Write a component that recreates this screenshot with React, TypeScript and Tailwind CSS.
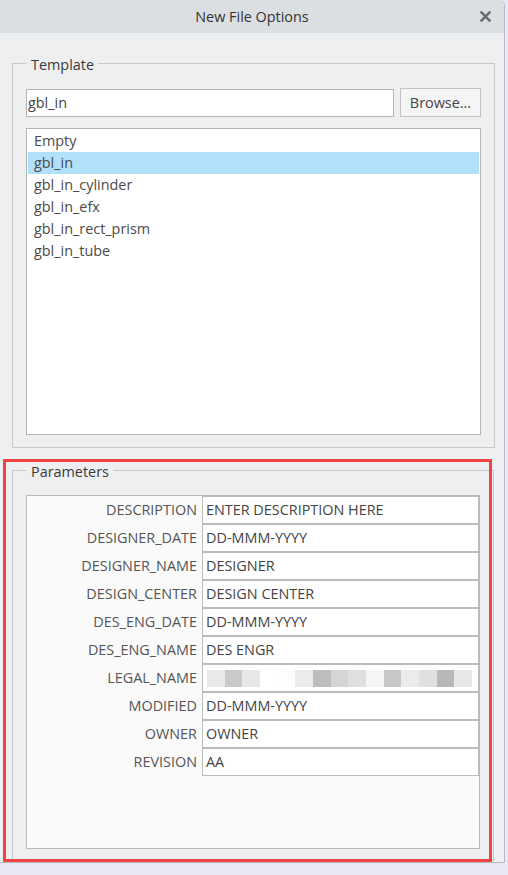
import React from "react";

const templates = [
  "Empty",
  "gbl_in",
  "gbl_in_cylinder",
  "gbl_in_efx",
  "gbl_in_rect_prism",
  "gbl_in_tube",
];

const params: { name: string; value: string }[] = [
  { name: "DESCRIPTION", value: "ENTER DESCRIPTION HERE" },
  { name: "DESIGNER_DATE", value: "DD-MMM-YYYY" },
  { name: "DESIGNER_NAME", value: "DESIGNER" },
  { name: "DESIGN_CENTER", value: "DESIGN CENTER" },
  { name: "DES_ENG_DATE", value: "DD-MMM-YYYY" },
  { name: "DES_ENG_NAME", value: "DES ENGR" },
  { name: "LEGAL_NAME", value: "" },
  { name: "MODIFIED", value: "DD-MMM-YYYY" },
  { name: "OWNER", value: "OWNER" },
  { name: "REVISION", value: "AA" },
];

// pixelated (redacted) value
function Redacted() {
  return (
    <div className="ml-[1px] w-[265px] h-[17px] grid grid-cols-15">
      <div className="bg-[#e9e9e9]" />
      <div className="bg-[#c9c9c9]" />
      <div className="bg-[#e8e8e8]" />
      <div className="bg-white" />
      <div className="bg-[#fdfdfd]" />
      <div className="bg-[#ebebeb]" />
      <div className="bg-[#bdbdbd]" />
      <div className="bg-[#d5d5d5]" />
      <div className="bg-[#dfdfdf]" />
      <div className="bg-[#f5f5f5]" />
      <div className="bg-[#c8c8c8]" />
      <div className="bg-[#ebebeb]" />
      <div className="bg-[#e0e0e0]" />
      <div className="bg-[#b8b8b8]" />
      <div className="bg-[#e8e8e8]" />
    </div>
  );
}

export default function App() {
  return (
    <div className="relative w-[508px] h-[875px] bg-[#e7e7f5] font-['Open_Sans',sans-serif] text-[14.4px]">
      <div className="w-[505px] h-[863px] bg-[#eeeff1] border-r border-b border-[#b9b9bd] rounded-tr-[6px] flex flex-col">
        {/* title bar */}
        <div className="relative h-[33px] shrink-0 bg-[#dcdfe1] rounded-tr-[6px] flex items-center justify-center">
          <span className="text-[#333333] leading-[20px]">New File Options</span>
          <svg
            className="absolute right-[13px] top-[11px]"
            width="11"
            height="11"
            viewBox="0 0 10 10"
          >
            <path
              d="M1.3 1.3 L8.7 8.7 M8.7 1.3 L1.3 8.7"
              stroke="#6b6b6b"
              strokeWidth="2.4"
              strokeLinecap="round"
            />
          </svg>
        </div>

        <div className="pl-[12px]">
          {/* Template */}
          <fieldset className="mt-[18px] w-[482px] border border-[#c9c9cc] px-[13px] pt-[13px] pb-[12px]">
            <legend className="ml-[1px] px-[4px] pt-[4px] leading-[20px] text-[#3a3a3a]">
              Template
            </legend>
            <div className="flex items-center gap-[6px]">
              <div className="w-[368px] h-[28px] bg-white border border-[#b4b4b4] pl-[1px] flex items-center text-[#444444]">
                gbl_in
              </div>
              <button
                type="button"
                className="w-[81px] h-[29px] bg-[#f5f5f5] border border-[#c2c2c2] text-[#444444] flex items-center justify-center"
              >
                Browse...
              </button>
            </div>
            <div className="mt-[11px] h-[307px] bg-white border border-[#b4b4b4] p-[1px]">
              {templates.map((t) => (
                <div
                  key={t}
                  className={`h-[22px] pl-[6px] leading-[22px] text-[#4a4a4a] ${
                    t === "gbl_in" ? "bg-[#b0e0fa]" : ""
                  }`}
                >
                  {t}
                </div>
              ))}
            </div>
          </fieldset>

          {/* Parameters */}
          <fieldset className="mt-[10px] w-[482px] border border-[#c9c9cc] px-[13px] pt-[13px] pb-[11px]">
            <legend className="ml-[1px] px-[4px] pt-[4px] leading-[20px] text-[#3a3a3a]">
              Parameters
            </legend>
            <div className="h-[354px] bg-[#fafafa] border border-[#b9b9b9] flex flex-col">
              {params.map((p) => (
                <div key={p.name} className="flex h-[28px]">
                  <div className="w-[175px] shrink-0 pr-[5px] text-right leading-[28px] text-[#555555]">
                    {p.name}
                  </div>
                  <div className="flex-1 bg-white border border-[#bcbcbc] pl-[3px] flex items-center text-[#444444]">
                    {p.name === "LEGAL_NAME" ? <Redacted /> : p.value}
                  </div>
                </div>
              ))}
            </div>
          </fieldset>
        </div>
      </div>

      {/* annotation box */}
      <div className="absolute left-[3px] top-[459px] w-[489px] h-[403px] border-[3px] border-[#f04343] pointer-events-none" />
    </div>
  );
}
